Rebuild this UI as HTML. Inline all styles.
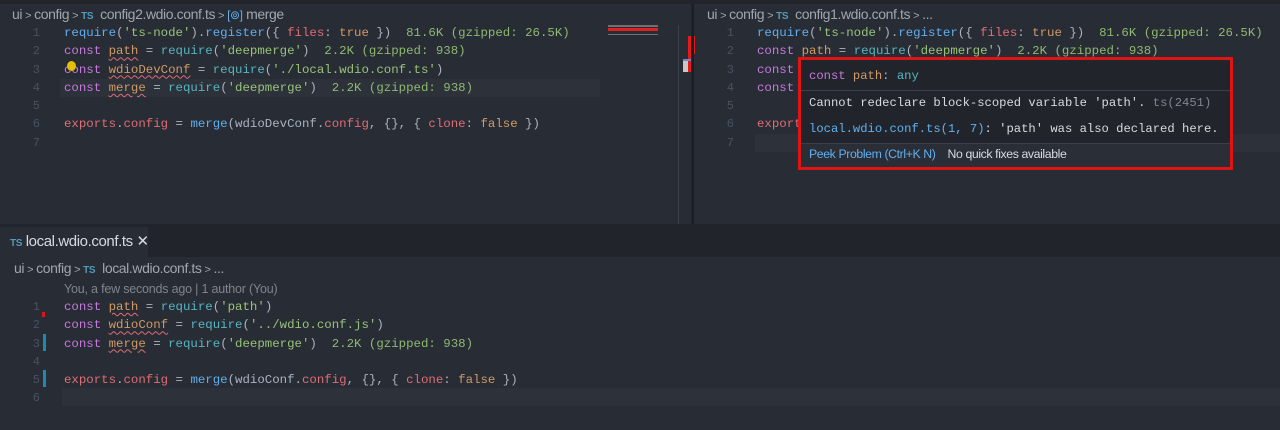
<!DOCTYPE html>
<html><head><meta charset="utf-8"><style>
*{margin:0;padding:0;box-sizing:border-box}
body{width:1280px;height:430px;background:#21252b;position:relative;overflow:hidden;font-family:"Liberation Sans",sans-serif}
.pane{position:absolute;background:#282c34}
.m{font-family:"Liberation Mono",monospace;font-size:12.4px;white-space:pre;position:absolute;color:#abb2bf;line-height:18.3px}
.ln{position:absolute;width:20px;text-align:right;font-family:"Liberation Mono",monospace;font-size:12px;color:#495162;line-height:18.3px}
.bc{position:absolute;font-size:14px;color:#a0a6b0;white-space:pre;letter-spacing:-0.4px}
.bc i{font-style:normal;font-size:11px;margin:0 3px}
.ts{color:#519aba;font-size:10px;font-weight:bold}
.k{color:#c678dd}.f{color:#61afef}.s{color:#98c379}.p{color:#e06c75}.o{color:#d19a66}.c{color:#56b6c2}.g{color:#8fb870}
.u{text-decoration:underline wavy #e06c75;text-decoration-thickness:1px;text-underline-offset:2px}
</style></head><body>
<div class="pane" style="left:0;top:4px;width:691px;height:220px"></div>
<div class="pane" style="left:694px;top:4px;width:586px;height:220px"></div>
<div style="position:absolute;left:60px;top:79px;width:540px;height:18px;background:#2c313a"></div>
<div class="bc" style="left:12px;top:6px">ui<i>&gt;</i>config<i>&gt;</i><span class="ts">TS</span>  config2.wdio.conf.ts<i>&gt;</i><span style="color:#61afef;font-size:12px">[⊚]</span> merge</div>
<div class="ln" style="left:20px;top:24px">1<br>2<br>3<br>4<br>5<br>6<br>7</div>
<div class="m" style="left:64px;top:24px"><span class="f">require</span>(<span class="s">'ts-node'</span>).<span class="f">register</span>({ <span class="p">files</span>: <span class="o">true</span> })  <span class="g">81.6K (gzipped: 26.5K)</span>
<span class="k">const</span> <span class="o u">path</span> = <span class="c">require</span>(<span class="s">'deepmerge'</span>)  <span class="g">2.2K (gzipped: 938)</span>
<span class="k">const</span> <span class="o u">wdioDevConf</span> = <span class="c">require</span>(<span class="s">'./local.wdio.conf.ts'</span>)
<span class="k">const</span> <span class="o u">merge</span> = <span class="c">require</span>(<span class="s">'deepmerge'</span>)  <span class="g">2.2K (gzipped: 938)</span>

<span class="p">exports</span>.<span class="p">config</span> = <span class="f">merge</span>(wdioDevConf.<span class="p">config</span>, {}, { <span class="p">clone</span>: <span class="o">false</span> })
</div>
<div style="position:absolute;left:67px;top:61px;width:9px;height:10px;border-radius:50%;background:#e5c000"></div>
<div style="position:absolute;left:608px;top:25px;width:50px;height:2px;background:#7a6a70"></div>
<div style="position:absolute;left:608px;top:28px;width:50px;height:3px;background:#d22"></div>
<div style="position:absolute;left:608px;top:34px;width:50px;height:1px;background:#6a7080"></div>
<div style="position:absolute;left:678px;top:25px;width:1px;height:199px;background:#3a3f4a"></div>
<div style="position:absolute;left:688px;top:36px;width:3px;height:36px;background:#e51a1a"></div>
<div style="position:absolute;left:683px;top:59px;width:8px;height:2px;background:#5d8fd6"></div>
<div style="position:absolute;left:683px;top:61px;width:5px;height:11px;background:#c8c8c8"></div>
<div class="bc" style="left:707px;top:6px">ui<i>&gt;</i>config<i>&gt;</i><span class="ts">TS</span>  config1.wdio.conf.ts<i>&gt;</i>...</div>
<div style="position:absolute;left:693px;top:36px;width:2px;height:18px;background:#e51a1a"></div>
<div class="ln" style="left:714px;top:24px">1<br>2<br>3<br>4<br>5<br>6<br>7</div>
<div style="position:absolute;left:755px;top:134px;width:525px;height:18px;background:#2c313a"></div>
<div class="m" style="left:757px;top:24px"><span class="f">require</span>(<span class="s">'ts-node'</span>).<span class="f">register</span>({ <span class="p">files</span>: <span class="o">true</span> })  <span class="g">81.6K (gzipped: 26.5K)</span>
<span class="k">const</span> <span class="o">path</span> = <span class="c">require</span>(<span class="s">'deepmerge'</span>)  <span class="g">2.2K (gzipped: 938)</span>
<span class="k">const</span>
<span class="k">const</span>

<span class="p">export</span></div>
<div style="position:absolute;left:798px;top:57px;width:435px;height:113px;border:3px solid #e01414;background:#21252b">
 <div class="m" style="left:8px;top:7px;font-size:12.2px"><span class="k">const</span> <span class="o">path</span>: <span class="c">any</span></div>
 <div style="position:absolute;left:0;top:30px;width:100%;height:1px;background:#3a3f4a"></div>
 <div class="m" style="left:8px;top:34px;color:#d7dae0;font-size:12.2px">Cannot redeclare block-scoped variable 'path'. <span style="color:#7f848e">ts(2451)</span></div>
 <div class="m" style="left:8px;top:60px;color:#d7dae0;font-size:12.2px"><span class="f">local.wdio.conf.ts(1, 7)</span>: 'path' was also declared here.</div>
 <div style="position:absolute;left:0;top:83px;width:100%;height:24px;background:#2a2e36;border-top:1px solid #3a3f4a"></div>
 <div style="position:absolute;left:8px;top:87px;font-size:12.3px;color:#61afef;letter-spacing:-0.4px;white-space:pre">Peek Problem (Ctrl+K N)    <span style="color:#d7dae0">No quick fixes available</span></div>
</div>
<div style="position:absolute;left:692px;top:4px;width:2px;height:220px;background:#1b1e23"></div>
<div class="pane" style="left:0;top:227px;width:148px;height:30px"></div>
<div class="bc" style="left:10px;top:232px;color:#d7dae0;font-size:15px"><span class="ts">TS</span> local.wdio.conf.ts ✕</div>
<div class="pane" style="left:0;top:257px;width:1280px;height:173px"></div>
<div class="bc" style="left:14px;top:260px">ui<i>&gt;</i>config<i>&gt;</i><span class="ts">TS</span>  local.wdio.conf.ts<i>&gt;</i>...</div>
<div style="position:absolute;left:64px;top:282px;font-size:12.5px;color:#7f848e;letter-spacing:-0.2px">You, a few seconds ago | 1 author (You)</div>
<div class="ln" style="left:20px;top:298px">1<br>2<br>3<br>4<br>5<br>6</div>
<div style="position:absolute;left:43px;top:334px;width:3px;height:17px;background:#1f8ab0"></div>
<div style="position:absolute;left:43px;top:370px;width:3px;height:17px;background:#1f8ab0"></div>
<div style="position:absolute;left:42px;top:312px;width:3px;height:5px;background:#e01414"></div>
<div style="position:absolute;left:62px;top:388px;width:1218px;height:18px;background:#2c313a"></div>
<div class="m" style="left:64px;top:298px"><span class="k">const</span> <span class="o u">path</span> = <span class="c">require</span>(<span class="s">'path'</span>)
<span class="k">const</span> <span class="o u">wdioConf</span> = <span class="c">require</span>(<span class="s">'../wdio.conf.js'</span>)
<span class="k">const</span> <span class="o u">merge</span> = <span class="c">require</span>(<span class="s">'deepmerge'</span>)  <span class="g">2.2K (gzipped: 938)</span>

<span class="p">exports</span>.<span class="p">config</span> = <span class="f">merge</span>(wdioConf.<span class="p">config</span>, {}, { <span class="p">clone</span>: <span class="o">false</span> })
</div>
</body></html>
